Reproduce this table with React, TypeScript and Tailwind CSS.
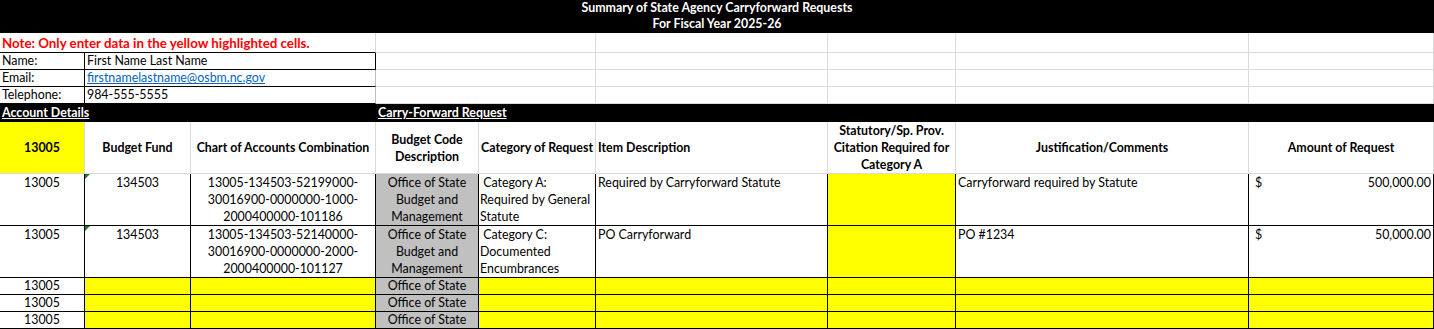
import clsx from "clsx";
import type { ReactNode } from "react";

// column grid shared by every row (widths include the 1px right border)
const grid = "grid grid-cols-[85px_106px_185px_103px_117px_232px_128px_293px_185px]";

const gl = "border-[#dadada]";

function Cell({ className, children }: { className?: string; children?: ReactNode }) {
  return <div className={clsx("border-r border-b overflow-hidden", className)}>{children}</div>;
}

function Flag() {
  return <span className="absolute left-0 top-0 w-0 h-0 border-t-[5px] border-r-[5px] border-t-[#1e7b34] border-r-transparent" />;
}

const dataRows = [
  {
    coa: ["13005-134503-52199000-", "30016900-0000000-1000-", "2000400000-101186"],
    cat: ["\u00a0Category A:", "Required by General", "Statute"],
    item: "Required by Carryforward Statute",
    just: "Carryforward required by Statute",
    amount: "500,000.00",
  },
  {
    coa: ["13005-134503-52140000-", "30016900-0000000-2000-", "2000400000-101127"],
    cat: ["\u00a0Category C:", "Documented", "Encumbrances"],
    item: "PO Carryforward",
    just: "PO #1234",
    amount: "50,000.00",
  },
];

export default function App() {
  return (
    <div className="w-[1434px] h-[329px] overflow-hidden bg-white text-[12.4px] leading-[16px] text-black font-['Lato','Liberation_Sans',sans-serif]">
      {/* title */}
      <div className="h-[33px] bg-black text-white font-bold text-center leading-[16px]">
        <div>Summary of State Agency Carryforward Requests</div>
        <div>For Fiscal Year 2025-26</div>
      </div>

      {/* note */}
      <div className={clsx(grid, "h-[20px]")}>
        <Cell className="col-span-3 border-b-black border-r-[#dadada] flex items-end pl-[2px] text-[#ff0000] font-bold text-[13.3px] leading-[18px] whitespace-nowrap">
          Note: Only enter data in the yellow highlighted cells.
        </Cell>
        <Cell className={clsx("col-span-2", gl)} />
        <Cell className={gl} />
        <Cell className={gl} />
        <Cell className={gl} />
        <Cell className={gl} />
      </div>

      {[
        ["Name:", "First Name Last Name"],
        ["Email:", "firstnamelastname@osbm.nc.gov"],
        ["Telephone:", "984-555-5555"],
      ].map(([label, value], i) => (
        <div key={label} className={clsx(grid, "h-[17px]")}>
          <Cell className="border-black flex items-end pl-[2px] whitespace-nowrap">{label}</Cell>
          <Cell className={clsx("col-span-2 border-b-black flex items-end pl-[2px] whitespace-nowrap", i === 0 ? "border-r-black" : "border-r-[#bcbcbc]")}>
            {i === 1 ? <span className="text-[#0563c1] underline">{value}</span> : value}
          </Cell>
          <Cell className={clsx("col-span-2", gl)} />
          <Cell className={gl} />
          <Cell className={gl} />
          <Cell className={gl} />
          <Cell className={gl} />
        </div>
      ))}

      {/* section bar */}
      <div className={clsx(grid, "h-[18px] bg-black text-white font-bold")}>
        <div className="pl-[2px] flex items-center whitespace-nowrap underline">Account Details</div>
        <div />
        <div />
        <div className="pl-[2px] flex items-center whitespace-nowrap underline overflow-visible">Carry-Forward Request</div>
      </div>

      {/* header */}
      <div className={clsx(grid, "h-[52px] font-bold leading-[17px]")}>
        <Cell className={clsx("bg-[#ffff00] flex items-center justify-center", gl)}>13005</Cell>
        <Cell className={clsx("flex items-center justify-center", gl)}>Budget Fund</Cell>
        <Cell className={clsx("flex items-center justify-center whitespace-nowrap", gl)}>Chart of Accounts Combination</Cell>
        <Cell className={clsx("flex flex-col items-center justify-center", gl)}>
          <span>Budget Code</span>
          <span>Description</span>
        </Cell>
        <Cell className={clsx("flex items-center justify-center whitespace-nowrap", gl)}>Category of Request</Cell>
        <Cell className={clsx("flex items-center pl-[2px]", gl)}>Item Description</Cell>
        <Cell className={clsx("flex flex-col items-center justify-center whitespace-nowrap", gl)}>
          <span>Statutory/Sp. Prov.</span>
          <span>Citation Required for</span>
          <span>Category A</span>
        </Cell>
        <Cell className={clsx("flex items-center justify-center", gl)}>Justification/Comments</Cell>
        <Cell className={clsx("flex items-center justify-center", gl)}>Amount of Request</Cell>
      </div>

      {/* filled data rows */}
      {dataRows.map((r, i) => (
        <div key={i} className={clsx(grid, "h-[52px] leading-[17px]")}>
          <Cell className="border-black text-center">13005</Cell>
          <Cell className="border-black text-center relative">
            <Flag />
            134503
          </Cell>
          <Cell className="border-black flex flex-col items-center whitespace-nowrap">
            {r.coa.map((l) => (
              <span key={l}>{l}</span>
            ))}
          </Cell>
          <Cell className="border-black bg-[#c0c0c0] flex flex-col items-center whitespace-nowrap">
            <span>Office of State</span>
            <span>Budget and</span>
            <span>Management</span>
          </Cell>
          <Cell className="border-black flex flex-col pl-[1px] whitespace-nowrap">
            {r.cat.map((l) => (
              <span key={l}>{l}</span>
            ))}
          </Cell>
          <Cell className="border-black pl-[2px] whitespace-nowrap">{r.item}</Cell>
          <Cell className="border-black bg-[#ffff00]" />
          <Cell className="border-black pl-[2px] whitespace-nowrap">{r.just}</Cell>
          <Cell className="border-black flex justify-between pl-[6px] pr-[2px]">
            <span>$</span>
            <span>{r.amount}</span>
          </Cell>
        </div>
      ))}

      {/* empty input rows */}
      {[0, 1, 2].map((i) => (
        <div key={i} className={clsx(grid, "h-[17px] leading-[16px]")}>
          <Cell className="border-black text-center">13005</Cell>
          <Cell className="border-black bg-[#ffff00]" />
          <Cell className="border-black bg-[#ffff00]" />
          <Cell className="border-black bg-[#c0c0c0] text-center whitespace-nowrap">Office of State</Cell>
          <Cell className="border-black bg-[#ffff00]" />
          <Cell className="border-black bg-[#ffff00]" />
          <Cell className="border-black bg-[#ffff00]" />
          <Cell className="border-black bg-[#ffff00]" />
          <Cell className="border-black bg-[#ffff00]" />
        </div>
      ))}
    </div>
  );
}
